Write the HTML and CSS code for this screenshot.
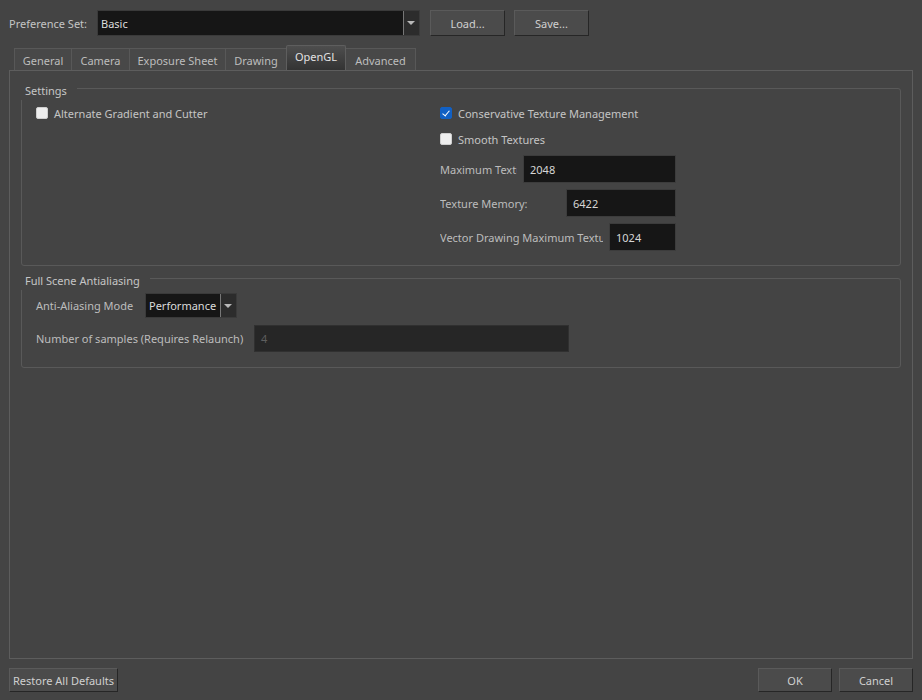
FILE: index.html
```html
<!DOCTYPE html>
<html lang="en">
<head>
    <meta charset="UTF-8">
    <title>Preferences</title>
    <link rel="stylesheet" href="styles.css">
</head>
<body>
    <div class="window">
        <div class="toolbar">
            <span class="set-label">Preference Set:</span>
            <div class="combo set-combo">
                <span class="combo-text">Basic</span>
                <span class="combo-arrow"></span>
            </div>
            <button class="btn load-btn">Load...</button>
            <button class="btn save-btn">Save...</button>
        </div>

        <div class="tabs">
            <div class="tab tab-general">General</div>
            <div class="tab tab-camera">Camera</div>
            <div class="tab tab-xsheet">Exposure Sheet</div>
            <div class="tab tab-drawing">Drawing</div>
            <div class="tab tab-opengl active">OpenGL</div>
            <div class="tab tab-advanced">Advanced</div>
        </div>

        <div class="pane">
            <div class="group settings">
                <div class="group-title">Settings</div>
                <div class="settings-grid">
                    <div class="col">
                        <label class="check"><span class="box"></span>Alternate Gradient and Cutter</label>
                    </div>
                    <div class="col">
                        <label class="check"><span class="box checked"></span>Conservative Texture Management</label>
                        <label class="check"><span class="box"></span>Smooth Textures</label>
                        <div class="field-row first">
                            <span class="field-label w-max">Maximum Texture Size</span>
                            <div class="input">2048</div>
                        </div>
                        <div class="field-row">
                            <span class="field-label w-mem">Texture Memory:</span>
                            <div class="input">6422</div>
                        </div>
                        <div class="field-row">
                            <span class="field-label w-vec">Vector Drawing Maximum Texture Size</span>
                            <div class="input">1024</div>
                        </div>
                    </div>
                </div>
            </div>

            <div class="group antialias">
                <div class="group-title">Full Scene Antialiasing</div>
                <div class="aa-row">
                    <span class="aa-label w-mode">Anti-Aliasing Mode</span>
                    <div class="combo mode-combo">
                        <span class="combo-text">Performance</span>
                        <span class="combo-arrow"></span>
                    </div>
                </div>
                <div class="aa-row samples">
                    <span class="aa-label w-samples">Number of samples (Requires Relaunch)</span>
                    <div class="input disabled">4</div>
                </div>
            </div>
        </div>

        <div class="footer">
            <button class="btn restore-btn">Restore All Defaults</button>
            <div class="spacer"></div>
            <button class="btn ok-btn">OK</button>
            <button class="btn cancel-btn">Cancel</button>
        </div>
    </div>
</body>
</html>
```

FILE: styles.css
```css
* {
    box-sizing: border-box;
}

body {
    margin: 0;
    background-color: #444444;
    font-family: "Noto Sans", "Open Sans", sans-serif;
    font-size: 11px;
    color: #c9c9c9;
}

.window {
    width: 922px;
    height: 700px;
    padding: 10px 9px 0 9px;
    display: flex;
    flex-direction: column;
}

/* top row */
.toolbar {
    display: flex;
    align-items: center;
    height: 26px;
}

.set-label {
    width: 88px;
    color: #c4c4c4;
}

.combo {
    display: flex;
    align-items: stretch;
    background: #161616;
    border: 1px solid #3a3a3a;
}

.combo-text {
    flex: 1;
    padding-left: 3px;
    display: flex;
    align-items: center;
    white-space: nowrap;
    overflow: hidden;
    color: #dcdcdc;
}

.combo-arrow {
    width: 16px;
    flex: none;
    background: #2c2c2c;
    border-left: 1px solid #777;
    position: relative;
}

.combo-arrow::after {
    content: "";
    position: absolute;
    left: 3px;
    top: 50%;
    margin-top: -2px;
    border-left: 4px solid transparent;
    border-right: 4px solid transparent;
    border-top: 4px solid #b8b8b8;
}

.set-combo {
    width: 323px;
    height: 26px;
}

.btn {
    font-family: inherit;
    font-size: 11px;
    color: #d0d0d0;
    background: #4b4b4b;
    border: 1px solid #5a5a5a;
    border-right-color: #262626;
    border-bottom-color: #262626;
    height: 26px;
    padding: 0;
    white-space: nowrap;
}

.load-btn {
    width: 75px;
    margin-left: 10px;
}

.save-btn {
    width: 75px;
    margin-left: 9px;
}

/* tabs */
.tabs {
    display: flex;
    align-items: flex-end;
    height: 25px;
    margin-top: 9px;
    padding-left: 5px;
}

.tab {
    height: 22px;
    padding-top: 2px;
    display: flex;
    align-items: center;
    justify-content: center;
    white-space: nowrap;
    background: #484848;
    border: 1px solid #585858;
    border-bottom: none;
    border-right: none;
    color: #bdbdbd;
}

.tab-general { width: 57px; }
.tab-camera { width: 58px; }
.tab-xsheet { width: 96px; }
.tab-drawing { width: 61px; }
.tab-opengl { width: 60px; }
.tab-advanced { width: 70px; }

.tab:last-child {
    border-right: 1px solid #585858;
}

.tab.active {
    height: 25px;
    padding-top: 0;
    padding-bottom: 3px;
    background: linear-gradient(#4e4e4e, #333333);
    border-color: #5e5e5e;
    border-right: 1px solid #5e5e5e;
    border-radius: 2px 2px 0 0;
    color: #e2e2e2;
}

.tab.active + .tab {
    border-left: none;
}

/* page body */
.pane {
    height: 589px;
    border: 1px solid #5d5d5d;
    padding: 17px 11px 0 11px;
}

.group {
    border: 1px solid #595959;
    border-radius: 3px;
    padding: 0 14px;
}

/* caption sits on the top edge and hides the corner */
.group-title {
    width: max-content;
    height: 18px;
    margin: -7px 0 0 -15px;
    padding: 0 10px 0 4px;
    background: #444444;
    color: #c6c6c6;
    line-height: 18px;
}

.settings {
    height: 178px;
}

.settings-grid {
    display: grid;
    grid-template-columns: 404px 236px;
}

.col {
    display: flex;
    flex-direction: column;
}

.check {
    display: flex;
    align-items: center;
    height: 26px;
    color: #c4c4c4;
}

.box {
    width: 12px;
    height: 12px;
    margin-right: 6px;
    border-radius: 2px;
    background: #eeeeee;
    border: 1px solid #cfcfcf;
}

.box.checked {
    background: #1160c4;
    border-color: #1160c4;
    position: relative;
}

.box.checked::after {
    content: "";
    position: absolute;
    left: 3px;
    top: 1px;
    width: 3px;
    height: 6px;
    border-right: 1.5px solid #ffffff;
    border-bottom: 1.5px solid #ffffff;
    transform: rotate(40deg);
}

.field-row {
    display: flex;
    align-items: center;
    margin-top: 6px;
}

.field-row.first {
    margin-top: 3px;
}

.field-label {
    white-space: nowrap;
    overflow: hidden;
    margin-right: 6px;
    color: #bcbcbc;
}

.w-max { width: 77px; }
.w-mem { width: 120px; }
.w-vec { width: 163px; }

.input {
    flex: 1;
    height: 28px;
    background: #161616;
    border: 1px solid #3c3c3c;
    padding-left: 6px;
    display: flex;
    align-items: center;
    color: #d6d6d6;
}

.antialias {
    height: 90px;
    margin-top: 12px;
}

.aa-row {
    display: flex;
    align-items: center;
    margin-top: 3px;
}

.aa-label {
    white-space: nowrap;
    margin-right: 6px;
    color: #bdbdbd;
}

.w-mode { width: 103px; }
.w-samples { width: 212px; }

.mode-combo {
    width: 92px;
    height: 25px;
}

.samples {
    margin-top: 7px;
}

.samples .input {
    flex: none;
    width: 315px;
    height: 27px;
}

.input.disabled {
    background: #262626;
    border-color: #303030;
    color: #5e5e5e;
}

/* bottom buttons */
.footer {
    display: flex;
    align-items: center;
    margin-top: 9px;
}

.spacer {
    flex: 1;
}

.footer .btn {
    height: 24px;
}

.restore-btn {
    width: 109px;
}

.ok-btn {
    width: 74px;
}

.cancel-btn {
    width: 74px;
    margin-left: 7px;
}
```
